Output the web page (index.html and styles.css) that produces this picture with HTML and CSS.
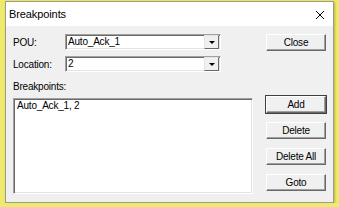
FILE: index.html
```html
<!DOCTYPE html>
<html lang="en">
<head>
  <meta charset="UTF-8" />
  <title>Breakpoints</title>
  <link rel="stylesheet" href="styles.css">
</head>
<body>

  <div class="dialog">
    <!-- Title bar -->
    <div class="titlebar">
      <span class="title">Breakpoints</span>
      <svg class="close-x" width="10" height="10" viewBox="0 0 10 10">
        <path d="M1 1 L9 9 M9 1 L1 9" stroke="#000" stroke-width="1" fill="none"/>
      </svg>
    </div>

    <div class="content">
      <!-- Left side -->
      <div class="left">
        <div class="row">
          <label class="lbl">POU:</label>
          <div class="combo">
            <span class="combo-text">Auto_Ack_1</span>
            <span class="combo-btn"><span class="arrow"></span></span>
          </div>
        </div>
        <div class="row">
          <label class="lbl">Location:</label>
          <div class="combo">
            <span class="combo-text">2</span>
            <span class="combo-btn"><span class="arrow"></span></span>
          </div>
        </div>
        <div class="list-label">Breakpoints:</div>
        <div class="listbox">
          <div class="list-item">Auto_Ack_1, 2</div>
        </div>
      </div>

      <!-- Buttons -->
      <div class="right">
        <button class="btn">Close</button>
        <div class="btn-group">
          <button class="btn default">Add</button>
          <button class="btn">Delete</button>
          <button class="btn">Delete All</button>
          <button class="btn">Goto</button>
        </div>
      </div>
    </div>
  </div>

</body>
</html>
```

FILE: styles.css
```css
* {
  box-sizing: border-box;
  margin: 0;
  padding: 0;
}
body {
  background-color: #efe96c;
  font-family: "Liberation Sans", Arial, sans-serif;
  font-size: 10px;
  letter-spacing: -0.2px;
  color: #000;
  padding: 1px 0 0 5px;
}
.dialog {
  width: 329px;
  height: 202px;
  border: 1px solid #9c9c8a;
  background-color: #f0f0f0;
  box-shadow: 1px 1px 2px rgba(120, 110, 20, 0.45);
  display: flex;
  flex-direction: column;
}
.titlebar {
  height: 24px;
  background-color: #fff;
  display: flex;
  align-items: center;
  justify-content: space-between;
  padding: 0 8px 0 3px;
}
.title {
  font-size: 11px;
  letter-spacing: -0.1px;
}
.close-x {
  display: block;
  margin-top: 1px;
}
.content {
  flex: 1;
  display: flex;
  padding: 8px 0 0 7px;
}
.left {
  width: 240px;
  display: flex;
  flex-direction: column;
}
.row {
  display: flex;
  align-items: center;
  height: 16px;
  margin-bottom: 6px;
}
.lbl {
  width: 52px;
}
.combo {
  width: 156px;
  height: 16px;
  background: #fff;
  border-top: 1px solid #a0a0a0;
  border-left: 1px solid #a0a0a0;
  border-bottom: 1px solid #fff;
  border-right: 1px solid #fff;
  box-shadow: inset 1px 1px 0 #696969, inset -1px -1px 0 #e3e3e3;
  display: flex;
  align-items: center;
  justify-content: space-between;
}
.combo-text {
  padding-left: 2px;
  line-height: 14px;
}
.combo-btn {
  width: 15px;
  height: 14px;
  margin-right: 1px;
  background: #f0f0f0;
  border-top: 1px solid #e3e3e3;
  border-left: 1px solid #e3e3e3;
  border-right: 1px solid #696969;
  border-bottom: 1px solid #696969;
  display: flex;
  align-items: center;
  justify-content: center;
}
.arrow {
  width: 0;
  height: 0;
  border-left: 3px solid transparent;
  border-right: 3px solid transparent;
  border-top: 3px solid #000;
  margin-top: 1px;
}
.list-label {
  margin-top: 2px;
  height: 14px;
  line-height: 14px;
}
.listbox {
  margin-top: 4px;
  width: 240px;
  height: 96px;
  background: #fff;
  border-top: 1px solid #a0a0a0;
  border-left: 1px solid #a0a0a0;
  border-bottom: 1px solid #fff;
  border-right: 1px solid #fff;
  box-shadow: inset 1px 1px 0 #696969, inset -1px -1px 0 #e3e3e3;
  padding: 1px 3px;
}
.list-item {
  line-height: 12px;
}
.right {
  margin-left: 13px;
  width: 60px;
  display: flex;
  flex-direction: column;
}
.btn {
  width: 60px;
  height: 17px;
  font-family: "Liberation Sans", Arial, sans-serif;
  font-size: 10px;
  letter-spacing: -0.2px;
  color: #000;
  background: #f0f0f0;
  border-top: 1px solid #fff;
  border-left: 1px solid #fff;
  border-right: 1px solid #696969;
  border-bottom: 1px solid #696969;
  box-shadow: inset -1px -1px 0 #a0a0a0;
}
.btn.default {
  outline: 1px solid #404040;
  outline-offset: 0;
}
.btn-group {
  margin-top: 45px;
  display: flex;
  flex-direction: column;
  gap: 9px;
}
```
